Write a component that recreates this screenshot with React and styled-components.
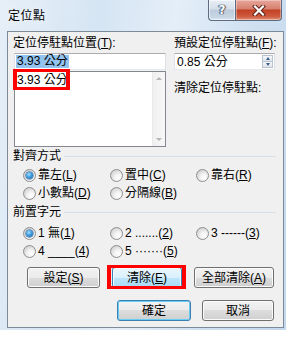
import React from 'react';
import styled, { createGlobalStyle, css } from 'styled-components';

const GlobalStyle = createGlobalStyle`
  html, body {
    margin: 0;
    padding: 0;
    background: #ffffff;
    overflow: hidden;
  }
  body {
    font-family: "Liberation Sans", "Noto Sans CJK TC", sans-serif;
    font-size: 12px;
    color: #000;
  }
`;

const Window = styled.div`
  width: 286px;
  height: 330px;
  display: flex;
  flex-direction: column;
  background: linear-gradient(100deg, #e6eff8 0%, #d6e5f3 30%, #e4eef8 52%, #cfe0f1 75%, #c3d8ee 100%);
`;

const TitleBar = styled.div`
  height: 31px;
  display: flex;
  justify-content: space-between;
  align-items: flex-start;
  padding-left: 8px;
  padding-right: 4px;
  box-sizing: border-box;
`;

const TitleText = styled.div`
  margin-top: 8px;
  font-family: "Noto Sans CJK TC", sans-serif;
  font-size: 12px;
  line-height: 14px;
  letter-spacing: 0.5px;
  text-shadow: 0 0 6px rgba(255, 255, 255, 0.9);
`;

const CaptionButtons = styled.div`
  display: flex;
  height: 21px;
`;

const CaptionButton = styled.div`
  height: 21px;
  box-sizing: border-box;
  display: flex;
  align-items: center;
  justify-content: center;
  border: 1px solid #5c6b80;
  border-top: none;
  ${(p) =>
    p.$close
      ? css`
          width: 47px;
          border-radius: 0 0 4px 0;
          background: linear-gradient(#e7a69a 0%, #d7806f 45%, #c23f22 50%, #cf5f43 85%, #e6977e 100%);
          box-shadow: inset 0 0 0 1px rgba(255, 255, 255, 0.35);
        `
      : css`
          width: 27px;
          border-right: none;
          border-radius: 0 0 0 4px;
          background: linear-gradient(#e8eef5 0%, #d5dfe9 45%, #bccbdb 50%, #c8d6e4 85%, #dbe6f1 100%);
          box-shadow: inset 0 0 0 1px rgba(255, 255, 255, 0.55);
        `}
`;

const HelpGlyph = styled.span`
  font-family: "DejaVu Sans", sans-serif;
  font-weight: bold;
  font-size: 12px;
  color: #fff;
  margin-top: -1px;
  text-shadow: 0 0 1px #3e4c5e, 0 0 1px #3e4c5e, 1px 0 1px #3e4c5e, -1px 0 1px #3e4c5e;
`;

const Body = styled.div`
  flex: 1;
  padding: 0 2px 2px 7px;
  display: flex;
`;

const Client = styled.div`
  flex: 1;
  box-sizing: border-box;
  height: 297px;
  border: 1px solid #7d8a98;
  background: #f0f0f0;
  display: flex;
  flex-direction: column;
`;

const TopSection = styled.div`
  display: flex;
  padding: 4px 0 0 5px;
  gap: 8px;
`;

const Column = styled.div`
  display: flex;
  flex-direction: column;
  width: ${(p) => p.$width}px;
`;

const FieldLabel = styled.div`
  line-height: 14px;
  height: 14px;
  white-space: nowrap;
  margin-top: ${(p) => p.$top || 0}px;
`;

const TextBox = styled.div`
  margin-top: 3px;
  margin-left: ${(p) => p.$indent || 0}px;
  height: 17px;
  box-sizing: border-box;
  border: 1px solid #abadb3;
  border-color: #abadb3 #dbdfe6 #e3e9ef #e2e3ea;
  background: #fff;
  display: flex;
  align-items: center;
  padding-left: 1px;
  line-height: 14px;
  position: relative;
`;

const Selected = styled.span`
  background: #93c3ef;
  padding: 0 1px;
  line-height: 13px;
`;

const ListBox = styled.div`
  margin-top: 1px;
  margin-left: 1px;
  height: 76px;
  box-sizing: border-box;
  border: 1px solid #828790;
  background: #fff;
  display: flex;
`;

const ListItems = styled.div`
  flex: 1;
  padding: 1px 1px;
`;

const ListItem = styled.div`
  position: relative;
  height: 14px;
  line-height: 14px;
  padding-left: 1px;

  &::after {
    content: '';
    position: absolute;
    left: -3px;
    top: -4px;
    width: 57px;
    height: 21px;
    box-sizing: border-box;
    border: 3px solid #ff0000;
    border-width: 3px 4px;
  }
`;

const ScrollBar = styled.div`
  width: 13px;
  display: flex;
  flex-direction: column;
  justify-content: space-between;
  align-items: center;
  background: linear-gradient(90deg, #f0f0f0, #f7f7f7);
  border-left: 1px solid #eaeaea;
  padding: 5px 0;
  box-sizing: border-box;
`;

const Arrow = styled.div`
  width: 0;
  height: 0;
  border-left: 3px solid transparent;
  border-right: 3px solid transparent;
  ${(p) =>
    p.$down
      ? css`border-top: 3px solid #b5b5b5;`
      : css`border-bottom: 3px solid #b5b5b5;`}
`;

const SpinBox = styled(TextBox)`
  padding-left: 2px;
  justify-content: space-between;
  padding-right: 1px;
`;

const SpinButtons = styled.div`
  width: 11px;
  height: 13px;
  display: flex;
  flex-direction: column;
`;

const SpinHalf = styled.div`
  flex: 1;
  display: flex;
  align-items: center;
  justify-content: center;
  border: 1px solid #b8c3cf;
  background: linear-gradient(#f5f7fa, #dfe5ec);
  ${(p) => p.$down && css`border-top: none;`}
`;

const SpinArrow = styled.div`
  width: 0;
  height: 0;
  border-left: 2.5px solid transparent;
  border-right: 2.5px solid transparent;
  ${(p) =>
    p.$down
      ? css`border-top: 3px solid #3b5f8a;`
      : css`border-bottom: 3px solid #3b5f8a;`}
`;

const GroupHeader = styled.div`
  display: flex;
  align-items: center;
  padding-left: 5px;
  padding-right: 7px;
  height: 14px;
  line-height: 14px;
  margin-top: ${(p) => p.$top}px;
`;

const GroupLine = styled.div`
  flex: 1;
  height: 1px;
  margin-left: 3px;
  margin-top: 1px;
  background: #d5dfe5;
`;

const RadioGrid = styled.div`
  display: grid;
  grid-template-columns: 87px 86px auto;
  grid-auto-rows: 18px;
  padding-left: 15px;
  margin-top: ${(p) => p.$top}px;
`;

const RadioItem = styled.div`
  display: flex;
  align-items: center;
  gap: 2px;
  white-space: nowrap;
  line-height: 14px;
`;

const RadioCircle = styled.span`
  width: 13px;
  height: 13px;
  box-sizing: border-box;
  border-radius: 50%;
  border: 1px solid #8e8f8f;
  background: radial-gradient(circle at 65% 70%, #ffffff 0%, #f2f2f2 35%, #d4d4d4 75%, #c6c6c6 100%);
  display: flex;
  align-items: center;
  justify-content: center;
  flex-shrink: 0;

  &::after {
    content: '';
    display: ${(p) => (p.$checked ? 'block' : 'none')};
    width: 7px;
    height: 7px;
    border-radius: 50%;
    background: radial-gradient(circle at 40% 35%, #9fe0ff 0%, #3f9be0 45%, #155b9c 100%);
    box-shadow: 0 0 0 0.5px #1c4f82;
  }
`;

const Key = styled.u`
  text-underline-offset: 1px;
`;

const ButtonRow = styled.div`
  display: flex;
  gap: ${(p) => p.$gap}px;
  justify-content: ${(p) => (p.$end ? 'flex-end' : 'flex-start')};
  padding-left: ${(p) => p.$left || 0}px;
  padding-right: ${(p) => p.$right || 0}px;
  margin-top: ${(p) => p.$top}px;
`;

const PushButton = styled.div`
  width: ${(p) => p.$width}px;
  height: 21px;
  box-sizing: border-box;
  border: 1px solid #707070;
  border-radius: 3px;
  display: flex;
  align-items: center;
  justify-content: center;
  line-height: 14px;
  white-space: nowrap;
  background: linear-gradient(#f2f2f2 0%, #ebebeb 50%, #dddddd 50%, #cfcfcf 100%);
  box-shadow: inset 0 0 0 1px #fbfbfb;
  ${(p) =>
    p.$hover &&
    css`
      border-color: #3c7fb1;
      background: linear-gradient(#eaf6fd 0%, #d9f0fc 50%, #bee6fd 50%, #a7d9f5 100%);
      box-shadow: inset 0 0 0 1px #f4fbff;
    `}
  ${(p) =>
    p.$default &&
    css`
      border-color: #3c7fb1;
      box-shadow: inset 0 0 0 1px #67cdf5;
    `}
`;

const Marked = styled.div`
  position: relative;
  display: flex;

  &::after {
    content: '';
    position: absolute;
    left: -5px;
    right: -4px;
    top: -2px;
    bottom: -1px;
    border: 3px solid #ff0000;
    border-width: 3px 4px;
  }
`;

const CloseIcon = () => (
  <svg width="14" height="11" viewBox="0 0 14 11">
    <path d="M3 1.5 L11 9.5 M11 1.5 L3 9.5" stroke="#5a1d12" strokeWidth="4" strokeLinecap="square" />
    <path d="M3 1.5 L11 9.5 M11 1.5 L3 9.5" stroke="#ffffff" strokeWidth="2.2" strokeLinecap="square" />
  </svg>
);

const Radio = ({ checked, children }) => (
  <RadioItem>
    <RadioCircle $checked={checked} />
    <span>{children}</span>
  </RadioItem>
);

const App = () => {
  return (
    <>
      <GlobalStyle />
      <Window>
        <TitleBar>
          <TitleText>定位點</TitleText>
          <CaptionButtons>
            <CaptionButton>
              <HelpGlyph>?</HelpGlyph>
            </CaptionButton>
            <CaptionButton $close>
              <CloseIcon />
            </CaptionButton>
          </CaptionButtons>
        </TitleBar>
        <Body>
          <Client>
            <TopSection>
              <Column $width={153}>
                <FieldLabel>
                  定位停駐點位置(<Key>T</Key>):
                </FieldLabel>
                <TextBox $indent={1}>
                  <Selected>3.93 公分</Selected>
                </TextBox>
                <ListBox>
                  <ListItems>
                    <ListItem>3.93 公分</ListItem>
                  </ListItems>
                  <ScrollBar>
                    <Arrow />
                    <Arrow $down />
                  </ScrollBar>
                </ListBox>
              </Column>
              <Column $width={101}>
                <FieldLabel>
                  預設定位停駐點(<Key>F</Key>):
                </FieldLabel>
                <SpinBox>
                  <span>0.85 公分</span>
                  <SpinButtons>
                    <SpinHalf>
                      <SpinArrow />
                    </SpinHalf>
                    <SpinHalf $down>
                      <SpinArrow $down />
                    </SpinHalf>
                  </SpinButtons>
                </SpinBox>
                <FieldLabel $top={11}>清除定位停駐點:</FieldLabel>
              </Column>
            </TopSection>

            <GroupHeader $top={2}>
              對齊方式
              <GroupLine />
            </GroupHeader>
            <RadioGrid $top={3}>
              <Radio checked>
                靠左(<Key>L</Key>)
              </Radio>
              <Radio>
                置中(<Key>C</Key>)
              </Radio>
              <Radio>
                靠右(<Key>R</Key>)
              </Radio>
              <Radio>
                小數點(<Key>D</Key>)
              </Radio>
              <Radio>
                分隔線(<Key>B</Key>)
              </Radio>
            </RadioGrid>

            <GroupHeader $top={3}>
              前置字元
              <GroupLine />
            </GroupHeader>
            <RadioGrid $top={5}>
              <Radio checked>
                1 無(<Key>1</Key>)
              </Radio>
              <Radio>
                2 .......(<Key>2</Key>)
              </Radio>
              <Radio>
                3 ------(<Key>3</Key>)
              </Radio>
              <Radio>
                4 ____(<Key>4</Key>)
              </Radio>
              <Radio>
                5 ·······(<Key>5</Key>)
              </Radio>
            </RadioGrid>

            <ButtonRow $top={7} $left={19} $gap={12}>
              <PushButton $width={73}>
                設定(<Key>S</Key>)
              </PushButton>
              <Marked>
                <PushButton $width={70} $hover>
                  清除(<Key>E</Key>)
                </PushButton>
              </Marked>
              <PushButton $width={80}>
                全部清除(<Key>A</Key>)
              </PushButton>
            </ButtonRow>

            <ButtonRow $top={12} $end $right={9} $gap={11}>
              <PushButton $width={74} $default>
                確定
              </PushButton>
              <PushButton $width={72}>取消</PushButton>
            </ButtonRow>
          </Client>
        </Body>
      </Window>
    </>
  );
};

export default App;
